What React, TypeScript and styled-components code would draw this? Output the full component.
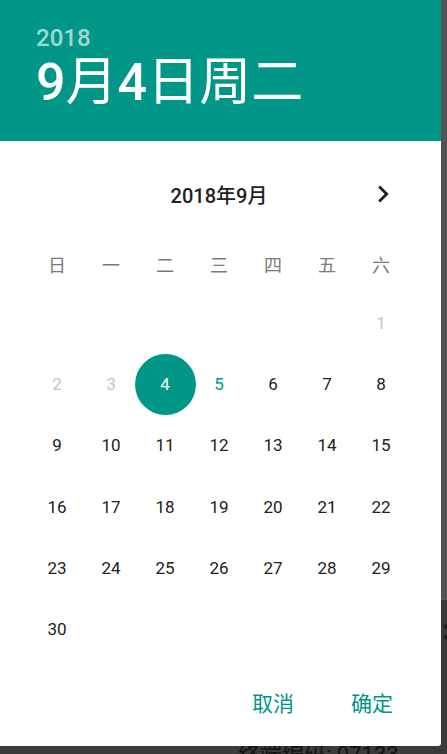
import React from 'react';
import styled, { createGlobalStyle } from 'styled-components';

const GlobalStyle = createGlobalStyle`
  html, body {
    margin: 0;
    padding: 0;
    background: #3c3c3c;
  }
  * {
    box-sizing: border-box;
  }
`;

const FONT = `Roboto, "Noto Sans CJK SC", sans-serif`;
const TEAL = '#009688';

const Screen = styled.div`
  position: relative;
  width: 447px;
  height: 754px;
  overflow: hidden;
  font-family: ${FONT};
  background: #3b3b3b;
`;

// the page behind the dimmed dialog
const Underlay = styled.div`
  display: flex;
  flex-direction: column;
`;

const UpperArea = styled.div`
  height: 600px;
  background: #525252;
  border-bottom: 1px solid #5a5a5a;
`;

const UnderRow = styled.div<{ right?: boolean; height: number; pad?: number; top?: number }>`
  display: flex;
  align-items: ${(p) => (p.top ? 'flex-start' : 'center')};
  justify-content: ${(p) => (p.right ? 'flex-end' : 'flex-start')};
  height: ${(p) => p.height}px;
  padding-left: ${(p) => p.pad || 0}px;
  padding-top: ${(p) => p.top || 0}px;
  margin-right: ${(p) => (p.right ? -8 : 0)}px;
  color: #111;
  font-size: 22px;
  line-height: 1;
  white-space: nowrap;
`;

const Dialog = styled.div`
  position: absolute;
  top: 0;
  left: 0;
  width: 441px;
  height: 746px;
  background: #fff;
  border-bottom-right-radius: 3px;
  display: flex;
  flex-direction: column;
`;

const Header = styled.div`
  height: 141px;
  background: ${TEAL};
  padding: 26px 0 0 36px;
  display: flex;
  flex-direction: column;
`;

const HeaderYear = styled.div`
  font-size: 24px;
  line-height: 24px;
  font-weight: 500;
  color: rgba(255, 255, 255, 0.65);
`;

const HeaderDate = styled.div`
  margin-top: 7px;
  font-size: 52px;
  line-height: 52px;
  font-weight: 400;
  color: #fff;
  white-space: nowrap;
`;

const Num = styled.span`
  font-weight: 500;
`;

const Body = styled.div`
  padding: 0 33px 0 30px;
  display: flex;
  flex-direction: column;
`;

const MonthRow = styled.div`
  margin-top: 28px;
  height: 50px;
  display: grid;
  grid-template-columns: 54px 1fr 54px;
  align-items: center;
`;

const MonthTitle = styled.div`
  grid-column: 2;
  text-align: center;
  font-size: 20px;
  font-weight: 500;
  color: #212121;
`;

const NavButton = styled.button`
  grid-column: 3;
  justify-self: center;
  width: 34px;
  height: 34px;
  padding: 0;
  margin-left: 4px;
  border: none;
  background: none;
  display: flex;
  align-items: center;
  justify-content: center;
`;

const WeekRow = styled.div`
  margin-top: 25px;
  height: 40px;
  display: grid;
  grid-template-columns: repeat(7, 54px);
  align-items: center;
`;

const WeekDay = styled.div`
  text-align: center;
  font-size: 18px;
  color: #7a7a7a;
`;

const DayGrid = styled.div`
  margin-top: 8.5px;
  display: grid;
  grid-template-columns: repeat(7, 54px);
  grid-auto-rows: 61.2px;
`;

const DayCell = styled.div<{ col?: number }>`
  display: flex;
  align-items: center;
  justify-content: center;
  ${(p) => (p.col ? `grid-column-start: ${p.col};` : '')}
`;

type DayState = 'normal' | 'disabled' | 'today' | 'selected';

const dayColor: Record<DayState, string> = {
  normal: '#212121',
  disabled: '#c4c4c4',
  today: TEAL,
  selected: '#fff',
};

const Day = styled.span<{ state: DayState }>`
  flex: none;
  width: 61px;
  height: 61px;
  border-radius: 50%;
  display: flex;
  align-items: center;
  justify-content: center;
  font-size: 17px;
  color: ${(p) => dayColor[p.state]};
  background: ${(p) => (p.state === 'selected' ? TEAL : 'transparent')};
`;

const ButtonBar = styled.div`
  margin-top: 21px;
  height: 48px;
  display: flex;
  justify-content: flex-end;
  align-items: center;
  gap: 33px;
  padding-right: 36px;
`;

const TextButton = styled.button`
  border: none;
  background: none;
  padding: 8px 12px;
  font-family: ${FONT};
  font-size: 21px;
  line-height: 1;
  color: ${TEAL};
`;

const ChevronRight = () => (
  <svg width="34" height="34" viewBox="0 0 24 24">
    <path d="M10 6L8.59 7.41 13.17 12l-4.58 4.59L10 18l6-6z" fill="#212121" />
  </svg>
);

const WEEKDAYS = ['日', '一', '二', '三', '四', '五', '六'];

const stateOf = (d: number): DayState => {
  if (d < 4) return 'disabled';
  if (d === 4) return 'selected';
  if (d === 5) return 'today';
  return 'normal';
};

export default function App() {
  const days = Array.from({ length: 30 }, (_, i) => i + 1);

  return (
    <Screen>
      <GlobalStyle />
      <Underlay>
        <UpperArea />
        <UnderRow right height={66}>
          3
        </UnderRow>
        <UnderRow height={40} pad={238} top={78}>
          终端编码: 07133
        </UnderRow>
      </Underlay>

      <Dialog>
        <Header>
          <HeaderYear>2018</HeaderYear>
          <HeaderDate>
            <Num>9</Num>月<Num>4</Num>日周二
          </HeaderDate>
        </Header>

        <Body>
          <MonthRow>
            <MonthTitle>2018年9月</MonthTitle>
            <NavButton>
              <ChevronRight />
            </NavButton>
          </MonthRow>

          <WeekRow>
            {WEEKDAYS.map((w) => (
              <WeekDay key={w}>{w}</WeekDay>
            ))}
          </WeekRow>

          <DayGrid>
            {days.map((d) => (
              <DayCell key={d} col={d === 1 ? 7 : undefined}>
                <Day state={stateOf(d)}>{d}</Day>
              </DayCell>
            ))}
          </DayGrid>
        </Body>

        <ButtonBar>
          <TextButton>取消</TextButton>
          <TextButton>确定</TextButton>
        </ButtonBar>
      </Dialog>
    </Screen>
  );
}
